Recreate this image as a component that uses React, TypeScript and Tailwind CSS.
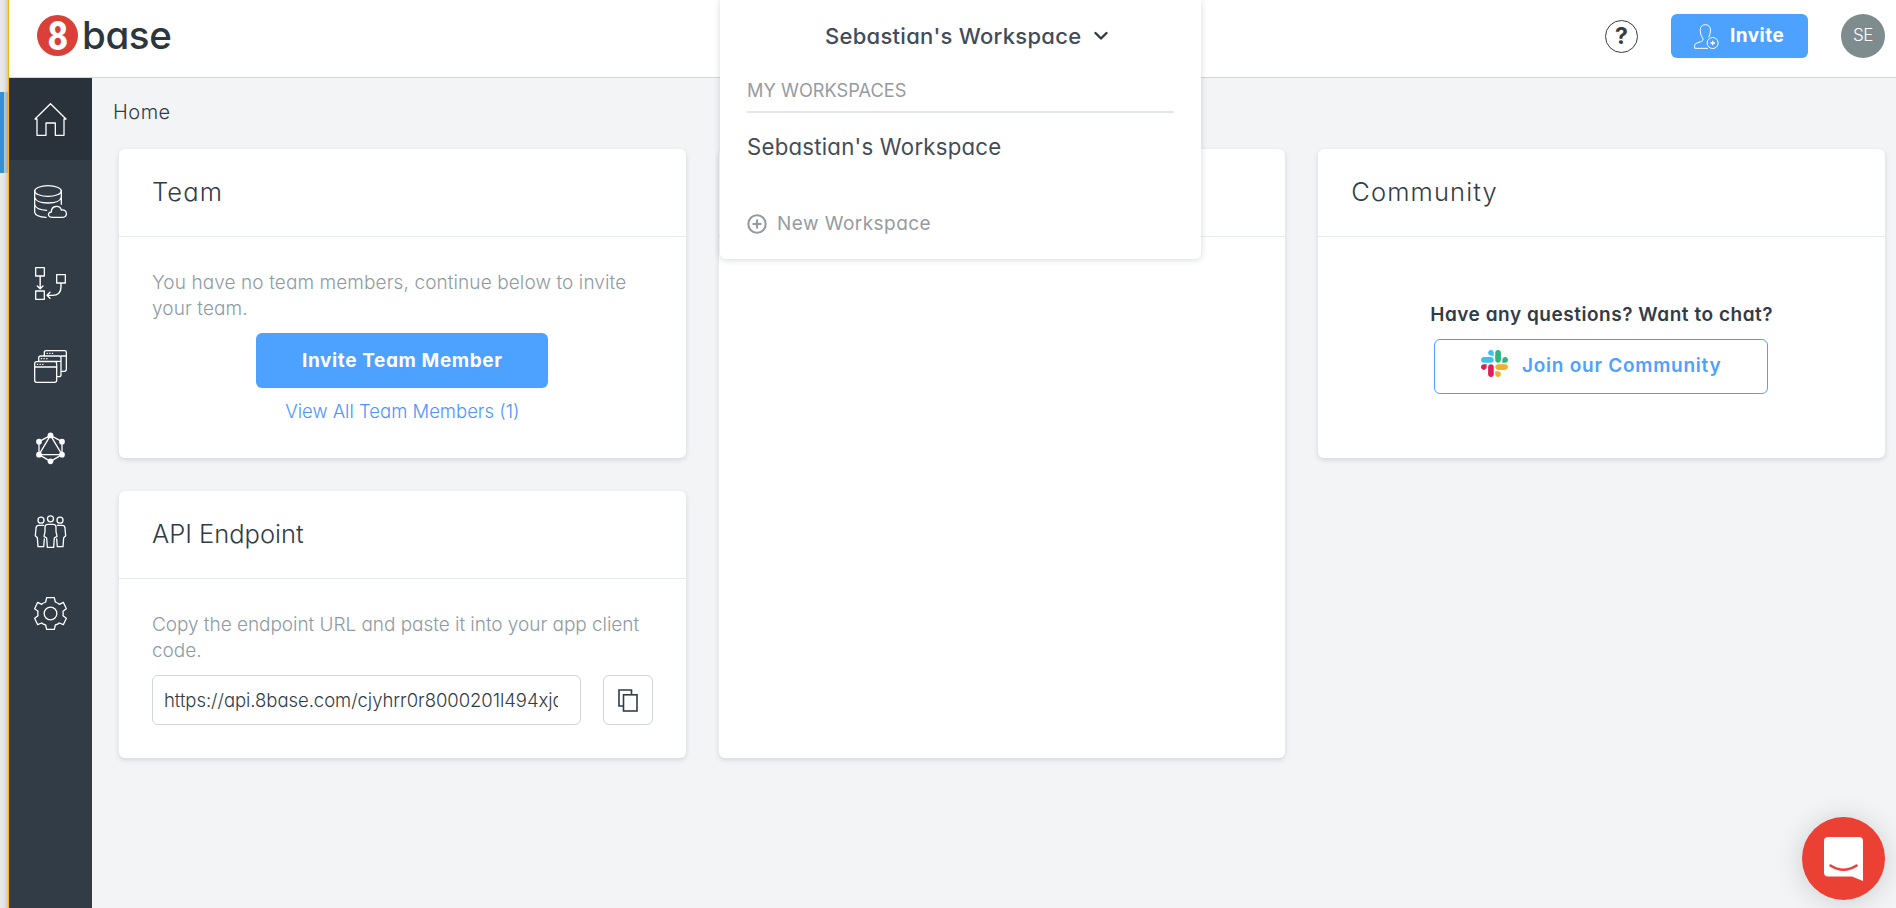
import type { ReactNode } from "react";

function Glyph({ children }: { children: ReactNode }) {
  return (
    <svg viewBox="0 0 99 99" className="size-[33px]" fill="none" stroke="#fff" strokeWidth="3.9" strokeLinejoin="round" strokeLinecap="round">
      {children}
    </svg>
  );
}

const navItems: { name: string; icon: ReactNode }[] = [
  {
    name: "home",
    icon: <path d="M9 48H3L49.500 2L96 48H90V97H64V60H36V97H9Z" strokeLinecap="butt" />,
  },
  {
    name: "data",
    icon: (
      <>
        <ellipse cx="42" cy="18" rx="40" ry="16" />
        <path d="M2 18V82Q5 95 36 97M82 18V58M2 37Q7 54 42 54Q77 54 82 37M2 59Q7 75 38 76" />
        <path d="M55 97C40 97 40 82 52 81C52 60 78 60 82 75C101 73 102 97 86 97Z" />
      </>
    ),
  },
  {
    name: "logic",
    icon: (
      <>
        <rect x="5" y="2" width="26" height="25" />
        <rect x="5" y="72" width="26" height="25" />
        <rect x="68" y="23" width="26" height="25" />
        <path d="M18.500 28V64M10 57L18.500 65L27 57M81 49V60Q81 85 55 85H40M48 76L39 85L48 94" strokeWidth="4.2" />
      </>
    ),
  },
  {
    name: "apps",
    icon: (
      <>
        <rect x="2" y="35" width="66" height="62" rx="6" />
        <path d="M2 51H68" />
        <path d="M14 34V24Q14 18 20 18H75Q81 18 81 24V74Q81 80 75 80H69M14 34H81" />
        <path d="M31 17V7Q31 2 37 2H92Q97 2 97 7V58Q97 64 91 64H82M81 18H97" />
        <path d="M10 43H11M18 43H19M26 43H27M22 26H23M30 26H31M38 26H39M39 10H40M47 10H48M55 10H56" />
      </>
    ),
  },
  {
    name: "graphql",
    icon: (
      <>
        <path d="M49.500 10L84 29V68L49.500 88L15 68V29ZM49.500 10L84 68H15Z" />
        <g fill="#fff" stroke="none">
          <circle cx="49.500" cy="10" r="8.500" />
          <circle cx="84" cy="29" r="8.500" />
          <circle cx="84" cy="68" r="8.500" />
          <circle cx="49.500" cy="88" r="8.500" />
          <circle cx="15" cy="68" r="8.500" />
          <circle cx="15" cy="29" r="8.500" />
        </g>
      </>
    ),
  },
  {
    name: "team",
    icon: (
      <>
        <circle cx="49.500" cy="11.500" r="9" />
        <circle cx="21" cy="15.500" r="9" />
        <circle cx="78" cy="15.500" r="9" />
        <path d="M41 28H58Q66 28 66 37V50L69 64L61 69L59 97H40L38 69L30 64L33 50V37Q33 28 41 28Z" />
        <path d="M29 31H14Q6 31 6 40L4 62L10 68L12 95H29L31 72" />
        <path d="M70 31H85Q93 31 93 40L95 62L89 68L87 95H70L68 72" />
      </>
    ),
  },
  {
    name: "settings",
    icon: (
      <>
        <path d="M38 2H61L64 15Q72 18 76 22L88 16L97 35L87 43Q88 49 87 56L97 64L88 83L76 78Q72 82 64 84L61 97H38L35 84Q27 82 23 78L11 83L2 64L12 56Q11 49 12 43L2 35L11 16L23 22Q27 18 35 15Z" />
        <circle cx="49.500" cy="49.500" r="19" />
      </>
    ),
  },
];

function SlackMark() {
  return (
    <svg viewBox="0 0 122.8 122.8" className="-mt-[6px] size-[27px]">
      <path fill="#E01E5A" d="M25.8 77.6c0 7.1-5.8 12.9-12.9 12.9S0 84.7 0 77.6s5.8-12.9 12.9-12.9h12.9v12.9zm6.5 0c0-7.1 5.8-12.9 12.9-12.9s12.900 5.8 12.900 12.900v32.300c0 7.100-5.800 12.900-12.900 12.900s-12.900-5.800-12.900-12.900V77.600z" />
      <path fill="#36C5F0" d="M45.200 25.800c-7.100 0-12.900-5.800-12.900-12.900S38.100 0 45.200 0s12.900 5.800 12.900 12.900v12.900H45.200zm0 6.500c7.100 0 12.900 5.800 12.900 12.900s-5.800 12.900-12.900 12.900H12.900C5.800 58.100 0 52.300 0 45.200s5.800-12.900 12.900-12.900h32.300z" />
      <path fill="#2EB67D" d="M97 45.200c0-7.100 5.800-12.900 12.900-12.900s12.900 5.800 12.900 12.900-5.800 12.900-12.900 12.900H97V45.200zm-6.500 0c0 7.100-5.800 12.900-12.900 12.900s-12.900-5.800-12.900-12.900V12.900C64.700 5.800 70.500 0 77.600 0s12.900 5.800 12.900 12.900v32.300z" />
      <path fill="#ECB22E" d="M77.600 97c7.100 0 12.900 5.800 12.900 12.900s-5.800 12.900-12.900 12.900-12.900-5.800-12.900-12.900V97h12.900zm0-6.500c-7.100 0-12.900-5.800-12.900-12.900s5.800-12.900 12.900-12.900h32.300c7.100 0 12.900 5.800 12.900 12.900s-5.800 12.900-12.900 12.900H77.600z" />
    </svg>
  );
}

function Card({ title, className, children }: { title?: ReactNode; className: string; children?: ReactNode }) {
  return (
    <section className={`rounded-md bg-white shadow-[0_2px_5px_rgba(50,60,90,0.16)] ${className}`}>
      <header className="flex h-[88px] items-center border-b border-[#e6ecf2] px-[33px] text-[25.5px] font-light">{title}</header>
      {children}
    </section>
  );
}

function WorkspaceMenu() {
  return (
    <div className="absolute top-0 left-[711px] flex h-[259px] w-[481px] flex-col rounded-b-md bg-white px-[27px] text-[#434c58] shadow-[0_1px_6px_rgba(50,60,90,0.2)]">
      <div className="flex h-[72px] items-center pl-[78px] text-[22px] font-medium tracking-[0.28px]">
        Sebastian's Workspace
        <svg viewBox="0 0 14 10" className="ml-[13px] h-[10px] w-[14px]" fill="none" stroke="#323c47" strokeWidth="2.400" strokeLinecap="round" strokeLinejoin="round">
          <path d="M1.500 2L7 7.500L12.500 2" />
        </svg>
      </div>
      <div className="flex h-[41px] items-center border-b-2 border-[#e3e6eb] pb-px text-[18.200px] tracking-[0.020px] text-[#969ba3]">MY WORKSPACES</div>
      <div className="mt-[18px] flex h-[32px] items-center text-[22.200px] tracking-[0.240px]">Sebastian's Workspace</div>
      <div className="mt-[44px] flex h-[34px] items-center gap-[10px] text-[19px] tracking-[0.450px] text-[#969ba3]">
        <svg viewBox="0 0 20 20" className="size-5" fill="none" stroke="#969ba3" strokeWidth="2.100">
          <circle cx="10" cy="10" r="8.700" />
          <path d="M10 5.500V14.500M5.500 10H14.500" />
        </svg>
        <span className="pt-px">New Workspace</span>
      </div>
    </div>
  );
}

function TopBar() {
  return (
    <header className="flex h-[78px] shrink-0 items-start border-b border-[#cfd6dc] bg-white">
      <div className="mt-[15px] ml-[28px] flex h-[41px] items-center">
        <div className="flex size-[41px] items-center justify-center rounded-full bg-[#db4038]">
          <span className="scale-x-[0.78] text-[39px] leading-[41px] font-extrabold text-white">8</span>
        </div>
        <span className="ml-[4px] text-[38.500px] leading-[41px] font-medium tracking-[-0.400px] text-[#2c363e]">base</span>
      </div>
      <div className="mt-[14px] mr-[11px] ml-auto flex h-[44px] items-center">
        <div className="flex size-[33px] items-center justify-center rounded-full border border-[#323c47] text-[23px] leading-none font-bold">?</div>
        <button className="ml-[33px] flex h-[44px] w-[137px] items-center rounded-md bg-[#4da1ff] pl-[23px] text-[19px] font-bold tracking-[0.450px] text-white">
          <svg viewBox="0 0 75 75" className="mr-[11px] size-[25px]" fill="none" stroke="#fff" strokeWidth="3">
            <path d="M42 73H2V64Q2 59 9 57L23 52Q28 50 27 44Q18 33 18.500 18Q20 2 34 2Q48 2 49.500 18Q50 28 44 40" />
            <circle cx="56" cy="57" r="16.500" />
            <path d="M56 50V64M49 57H63" strokeWidth="4" />
          </svg>
          Invite
        </button>
        <div className="ml-[33px] flex size-[44px] items-center justify-center rounded-full bg-[#7f8c8d] text-[17px] font-light tracking-[-0.4px] text-white">SE</div>
      </div>
    </header>
  );
}

export default function App() {
  return (
    <div className="flex h-[908px] w-full overflow-hidden bg-[#f3f4f6] font-['Inter','Noto_Sans',sans-serif] text-[#323c47] [font-feature-settings:'cv11']">
      <div className="flex w-[8px] shrink-0 flex-col bg-linear-to-r from-[#e9e9eb] via-[#e4e4e6] to-[#c9c9c9] pt-[92px]">
        <div className="flex h-[81px]">
          <div className="w-[4px] bg-[#3590d1]" />
          <div className="w-[4px] bg-linear-to-r from-[#b4cbdb] to-[#98b0c0]" />
        </div>
      </div>
      <div className="w-px shrink-0 bg-[#f5b50f]" />
      <div className="relative flex min-w-0 grow flex-col">
        <TopBar />
        <div className="flex grow">
          <nav className="flex w-[83px] shrink-0 flex-col bg-[#323c47]">
            {navItems.map((item, i) => (
              <a key={item.name} className={`flex h-[82.4px] shrink-0 items-center justify-center ${i === 0 ? "bg-[#29313a]" : ""}`}>
                <Glyph>{item.icon}</Glyph>
              </a>
            ))}
          </nav>
          <main className="grow pr-[11px] pl-[27px]">
            <div className="-ml-[6px] pt-[19px] text-[20px] leading-[31px] font-light tracking-[0.5px]">Home</div>
            <div className="mt-[21px] grid grid-cols-3 grid-rows-[309px_267px] gap-[33px]">
              <Card title={<span className="tracking-[1.100px]">Team</span>} className="">
                <div className="flex flex-col items-center px-[33px] pt-[33px]">
                  <p className="w-full text-[19px] leading-[26px] font-light tracking-[0.1px] text-[#8e9ba3]">
                    You have no team members, continue below to invite your team.
                  </p>
                  <button className="mt-[11px] h-[55px] w-[292px] rounded-md bg-[#4da1ff] pt-px text-[19px] font-bold tracking-[0.6px] text-white">Invite Team Member</button>
                  <a className="mt-[10px] text-[18.500px] leading-[26px] font-light text-[#4d94ff]">View All Team Members (1)</a>
                </div>
              </Card>
              <Card className="row-span-2" />
              <Card title={<span className="tracking-[1.100px]">Community</span>} className="">
                <div className="flex flex-col items-center pt-[65px]">
                  <p className="text-[19px] leading-[26px] font-semibold tracking-[0.530px]">Have any questions? Want to chat?</p>
                  <button className="mt-[11px] mr-px flex h-[55px] w-[334px] items-center justify-center gap-[14px] rounded-md border border-[#4da1ff] text-[19px] font-semibold tracking-[0.750px] text-[#4da1ff]">
                    <SlackMark />
                    Join our Community
                  </button>
                </div>
              </Card>
              <Card title="API Endpoint" className="">
                <div className="px-[33px] pt-[33px]">
                  <p className="text-[19px] leading-[26px] font-light tracking-[-0.040px] text-[#8e9ba3]">Copy the endpoint URL and paste it into your app client code.</p>
                  <div className="mt-[11px] flex justify-between">
                    <div className="h-[50px] w-[429px] rounded-md border border-[#d0d7dd] px-[11px]">
                      <div className="w-[394px] overflow-hidden text-[18.500px] leading-[48px] font-light tracking-[-0.050px] whitespace-nowrap">
                        https://api.8base.com/cjyhrr0r8000201l494xjqzk
                      </div>
                    </div>
                    <button className="flex h-[50px] w-[50px] items-center justify-center rounded-md border border-[#d0d7dd]">
                      <svg viewBox="0 0 20 23" className="h-[23px] w-[20px]" fill="none" stroke="#323c47" strokeWidth="1.600">
                        <path d="M5 17H1V1H13.500V5" />
                        <rect x="5.500" y="5.800" width="13.500" height="16.200" />
                      </svg>
                    </button>
                  </div>
                </div>
              </Card>
            </div>
          </main>
        </div>
        <WorkspaceMenu />
        <div className="absolute right-[11px] bottom-[8px] flex size-[83px] items-center justify-center rounded-full bg-[#eb4034] shadow-[0_2px_28px_rgba(0,0,0,0.160)]">
          <svg viewBox="0 0 39 44" className="h-[44px] w-[39px]">
            <path fill="#fff" d="M4 0H35Q39 0 39 4V44L28 39.500H4Q0 39.500 0 35.500V4Q0 0 4 0Z" />
            <path d="M6.500 28.500Q19.500 37 32.500 28.500" fill="none" stroke="#eb4034" strokeWidth="2.600" strokeLinecap="round" />
          </svg>
        </div>
      </div>
    </div>
  );
}
